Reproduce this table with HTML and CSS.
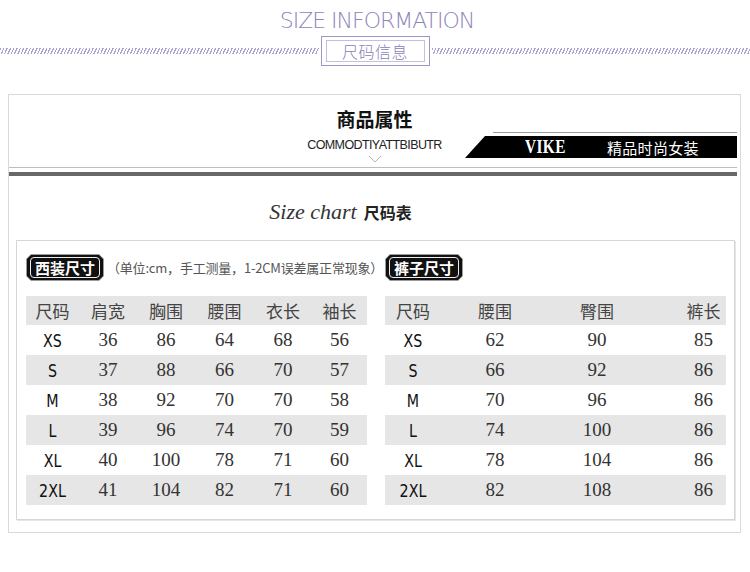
FILE: index.html
```html
<!DOCTYPE html>
<html lang="zh">
<head>
<meta charset="utf-8">
<title>Size information</title>
<link rel="stylesheet" href="styles.css">
</head>
<body>
<div class="page">
  <div class="top-title">SIZE INFORMATION</div>
  <div class="ribbon">
    <div class="hatch"></div>
    <div class="rbox"><div class="rbox-in">尺码信息</div></div>
    <div class="hatch"></div>
  </div>

  <div class="frame">
    <div class="head">
      <div></div>
      <div class="head-title">
        <div class="zh">商品属性</div>
        <div class="en">COMMODTIYATTBIBUTR</div>
        <svg class="chev" width="14" height="8" viewBox="0 0 14 8"><path d="M1 1 L7 7 L13 1" fill="none" stroke="#b5b5b5" stroke-width="1"/></svg>
      </div>
      <div class="banner">
        <div class="banner-line"></div>
        <div class="band"><span class="vike">VIKE</span><span class="band-zh">精品时尚女装</span></div>
      </div>
    </div>
    <div class="rule-thin"></div>
    <div class="rule-thick"></div>

    <div class="chart-title"><span class="sc">Size chart</span><span class="sc-zh">尺码表</span></div>

    <div class="tables">
      <div class="tcol">
        <div class="tag-row">
          <span class="tag"><span class="tag-in"><span class="tag-txt">西装尺寸</span></span></span>
          <span class="note">（单位:cm，手工测量，1-2CM误差属正常现象）</span>
        </div>
        <div class="table suit">
          <div class="row hrow"><span>尺码</span><span>肩宽</span><span>胸围</span><span>腰围</span><span>衣长</span><span>袖长</span></div>
          <div class="row"><span class="sz">XS</span><span>36</span><span>86</span><span>64</span><span>68</span><span>56</span></div>
          <div class="row grey"><span class="sz">S</span><span>37</span><span>88</span><span>66</span><span>70</span><span>57</span></div>
          <div class="row"><span class="sz">M</span><span>38</span><span>92</span><span>70</span><span>70</span><span>58</span></div>
          <div class="row grey"><span class="sz">L</span><span>39</span><span>96</span><span>74</span><span>70</span><span>59</span></div>
          <div class="row"><span class="sz">XL</span><span>40</span><span>100</span><span>78</span><span>71</span><span>60</span></div>
          <div class="row grey"><span class="sz">2XL</span><span>41</span><span>104</span><span>82</span><span>71</span><span>60</span></div>
        </div>
      </div>
      <div class="tcol">
        <div class="tag-row">
          <span class="tag"><span class="tag-in"><span class="tag-txt">裤子尺寸</span></span></span>
        </div>
        <div class="table pants">
          <div class="row hrow"><span>尺码</span><span>腰围</span><span>臀围</span><span>裤长</span></div>
          <div class="row"><span class="sz">XS</span><span>62</span><span>90</span><span>85</span></div>
          <div class="row grey"><span class="sz">S</span><span>66</span><span>92</span><span>86</span></div>
          <div class="row"><span class="sz">M</span><span>70</span><span>96</span><span>86</span></div>
          <div class="row grey"><span class="sz">L</span><span>74</span><span>100</span><span>86</span></div>
          <div class="row"><span class="sz">XL</span><span>78</span><span>104</span><span>86</span></div>
          <div class="row grey"><span class="sz">2XL</span><span>82</span><span>108</span><span>86</span></div>
        </div>
      </div>
    </div>
  </div>
</div>
</body>
</html>
```

FILE: styles.css
```css
html, body {
  margin: 0;
  padding: 0;
  background: #fff;
}
body {
  font-family: "Liberation Sans", "Noto Sans CJK SC", sans-serif;
  color: #222;
}
.page {
  width: 750px;
  height: 572px;
  overflow: hidden;
}
.top-title {
  margin-top: 7px;
  height: 28px;
  line-height: 28px;
  text-align: center;
  padding-left: 4px;
  font-family: "DejaVu Sans", sans-serif;
  font-weight: 200;
  font-stretch: condensed;
  font-size: 22px;
  color: #8d84bb;
  letter-spacing: -1px;
}
.ribbon {
  display: flex;
  align-items: center;
  height: 30px;
  margin-top: 1px;
}
.hatch {
  flex: 1;
  height: 6px;
  background: repeating-linear-gradient(115deg, #aaa2d2 0 1.2px, transparent 1.2px 3px);
}
.rbox {
  width: 109px;
  height: 30px;
  box-sizing: border-box;
  border: 1px solid #9d95c6;
  padding: 3px 4px;
  margin: 0 2px;
}
.rbox-in {
  height: 100%;
  box-sizing: border-box;
  border: 1px solid #c4bee0;
  display: flex;
  align-items: center;
  justify-content: center;
  font-family: "Noto Sans CJK SC", sans-serif;
  font-weight: 300;
  font-size: 16px;
  color: #8a80b6;
  letter-spacing: 0.5px;
}

.frame {
  margin: 28px 0 0 8px;
  width: 733px;
  box-sizing: border-box;
  border: 1px solid #d9d9d9;
  padding-bottom: 12px;
}
.head {
  display: grid;
  grid-template-columns: 1fr auto 1fr;
  height: 72px;
}
.head-title {
  text-align: center;
  padding-top: 11px;
}
.head-title .zh {
  font-family: "Noto Sans CJK SC", sans-serif;
  font-weight: 700;
  font-size: 19px;
  line-height: 26px;
  color: #111;
}
.head-title .en {
  margin-top: 6px;
  font-family: "Liberation Sans", sans-serif;
  font-size: 12.5px;
  line-height: 14px;
  letter-spacing: -0.6px;
  color: #222;
}
.chev {
  display: block;
  margin: 3px auto 0;
}
.banner {
  justify-self: end;
  align-self: end;
  width: 272px;
  margin-right: 3px;
  margin-bottom: 9px;
}
.banner-line {
  height: 1px;
  background: #9a9a9a;
  margin-left: 28px;
  margin-bottom: 3px;
}
.band {
  height: 22px;
  background: #000;
  clip-path: polygon(20px 0, 100% 0, 100% 100%, 0 100%);
  display: flex;
  align-items: center;
  color: #fff;
}
.vike {
  margin-left: 60px;
  font-family: "Liberation Serif", serif;
  font-weight: 700;
  font-size: 18px;
  letter-spacing: 0.5px;
  transform: scaleX(0.85);
  transform-origin: left center;
}
.band-zh {
  margin-left: 34px;
  font-family: "Noto Sans CJK SC", sans-serif;
  font-size: 15px;
  letter-spacing: 0.3px;
}
.rule-thin {
  height: 1px;
  background: #bdbdbd;
  margin-right: 3px;
}
.rule-thick {
  height: 4px;
  background: #686868;
  margin: 4px 3px 0 0;
}
.chart-title {
  margin: 24px 68px 16px 0;
  display: flex;
  justify-content: center;
  align-items: baseline;
  line-height: 24px;
}
.sc {
  font-family: "Liberation Serif", serif;
  font-style: italic;
  font-size: 22px;
  color: #333;
}
.sc-zh {
  margin-left: 7px;
  font-family: "Noto Sans CJK SC", sans-serif;
  font-weight: 700;
  font-size: 16px;
  color: #222;
}

.tables {
  margin: 0 5px 0 7px;
  border: 1px solid #d6d6d6;
  box-shadow: 1px 1px 0 #e6e6e6;
  display: flex;
  gap: 18px;
  padding: 13px 8px 14px 9px;
}
.tcol {
  width: 341px;
  flex-shrink: 0;
}
.tag-row {
  display: flex;
  align-items: center;
  height: 27px;
  margin-bottom: 15px;
}
.tag {
  display: inline-block;
  flex-shrink: 0;
  white-space: nowrap;
  background: #9a9a9a;
  padding: 1px;
  clip-path: polygon(5px 0, calc(100% - 5px) 0, 100% 5px, 100% calc(100% - 5px), calc(100% - 5px) 100%, 5px 100%, 0 calc(100% - 5px), 0 5px);
}
.tag-in {
  display: block;
  background: #111;
  padding: 2px 3px;
  clip-path: polygon(4px 0, calc(100% - 4px) 0, 100% 4px, 100% calc(100% - 4px), calc(100% - 4px) 100%, 4px 100%, 0 calc(100% - 4px), 0 4px);
}
.tag-txt {
  display: block;
  border: 1px solid #eee;
  border-radius: 4px;
  padding: 0 4px;
  height: 19px;
  line-height: 19px;
  font-family: "Noto Sans CJK SC", sans-serif;
  font-weight: 700;
  font-size: 15px;
  color: #fff;
}
.note {
  margin-left: 3px;
  font-family: "Noto Sans CJK SC", sans-serif;
  font-size: 13px;
  color: #555;
  white-space: nowrap;
  letter-spacing: -0.2px;
}
.table .row {
  display: grid;
  height: 30px;
  align-items: center;
  text-align: center;
  background: #fff;
  font-family: "Liberation Serif", serif;
  font-size: 19px;
  color: #333;
}
.table .row.grey {
  background: #e6e6e6;
}
.table .hrow {
  height: 29px;
  background: #e5e5e5;
  font-family: "Noto Sans CJK SC", sans-serif;
  font-size: 17px;
  color: #444;
}
.suit .row {
  grid-template-columns: 53px 58px 58px 59px 58px 55px;
}
.pants .row {
  grid-template-columns: 56px 108px 96px 81px;
}
.pants .row span:last-child {
  padding-left: 36px;
}
.sz {
  font-family: "DejaVu Sans Condensed", "DejaVu Sans", sans-serif;
  font-stretch: condensed;
  font-size: 18px;
  color: #111;
  transform: scaleX(0.88);
}
```
